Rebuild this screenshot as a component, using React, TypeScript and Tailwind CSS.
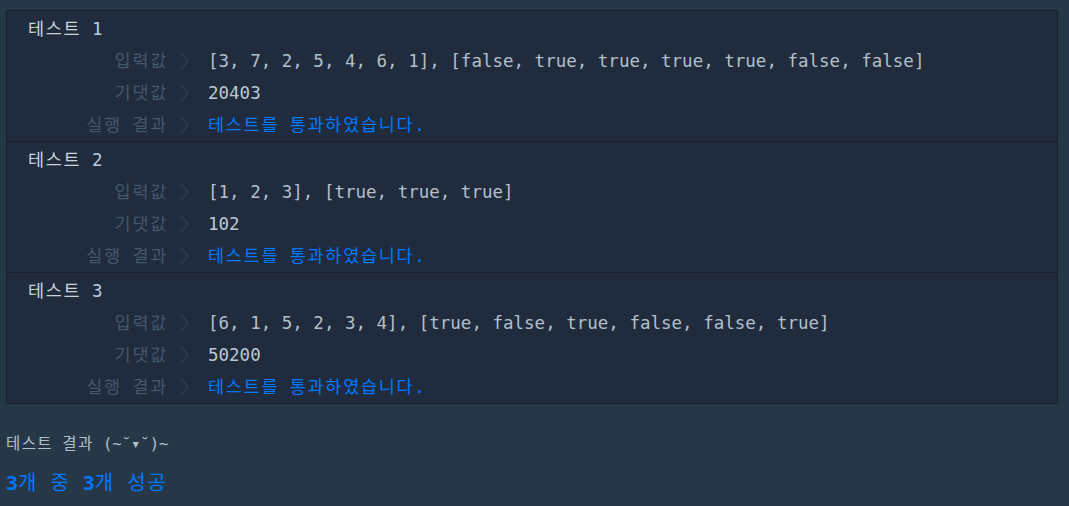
import React from 'react';

type TestCase = {
  input: string;
  expected: string;
};

const cases: TestCase[] = [
  { input: '[3, 7, 2, 5, 4, 6, 1], [false, true, true, true, true, false, false]', expected: '20403' },
  { input: '[1, 2, 3], [true, true, true]', expected: '102' },
  { input: '[6, 1, 5, 2, 3, 4], [true, false, true, false, false, true]', expected: '50200' },
];

const mono = "font-['DejaVu_Sans_Mono','Noto_Sans_CJK_KR',monospace]";

// 한글은 전각 폭으로 맞춤
function Ko({ text, wide = 'tracking-[1.7px]' }: { text: string; wide?: string }) {
  const parts = text.split(/([\uAC00-\uD7A3]+)/);
  return (
    <>
      {parts.map((p, i) =>
        /[\uAC00-\uD7A3]/.test(p) ? (
          <span key={i} className={wide}>
            {p}
          </span>
        ) : (
          <React.Fragment key={i}>{p}</React.Fragment>
        ),
      )}
    </>
  );
}

function Chevron() {
  return (
    <svg width="9" height="18" viewBox="0 0 9 18" className="ml-[12px]" aria-hidden>
      <polyline points="1,1 8,9 1,17" fill="none" stroke="#2f3e50" strokeWidth="1.2" />
    </svg>
  );
}

function Row({ label, children }: { label: string; children: React.ReactNode }) {
  return (
    <div className="grid h-[32px] grid-cols-[161px_40px_1fr] items-center">
      <span className="text-right text-[#44576c]">
        <Ko text={label} />
      </span>
      <span className="flex items-center">
        <Chevron />
      </span>
      <span className="whitespace-pre">{children}</span>
    </div>
  );
}

export default function App() {
  return (
    <div className={`min-h-[506px] w-full bg-[#263747] pt-[10px] ${mono}`}>
      <div className="ml-[6px] w-[1052px] border border-[#172130] bg-[#202b3d] text-[17.5px] leading-[32px]">
        {cases.map((c, i) => (
          <div
            key={i}
            className={`pt-[2px] ${i < cases.length - 1 ? 'border-b border-[#172130]' : ''}`}
          >
            <div className="h-[32px] pl-[21px] text-[#c9d3dd]">
              <Ko text="테스트 " />
              <span className="text-[#b9cde0]">{i + 1}</span>
            </div>
            <Row label="입력값">
              <span className="text-[#b2c0cc]">{c.input}</span>
            </Row>
            <Row label="기댓값">
              <span className="text-[#bcc9d4]">{c.expected}</span>
            </Row>
            <Row label="실행 결과">
              <span className="text-[#0078ff]">
                <Ko text="테스트를 통과하였습니다." />
              </span>
            </Row>
          </div>
        ))}
      </div>

      <div className="px-[6px] pt-[28px]">
        <div className="h-[24px] text-[15.5px] leading-[24px] text-[#b2c0cc]">
          <Ko text="테스트 결과 " wide="tracking-[1.4px]" />
          (~˘▾˘)~
        </div>
        <div className="mt-[11px] h-[32px] text-[20px] leading-[32px] text-[#0078ff]">
          <span className="font-bold">3</span>
          <Ko text="개 중 " wide="tracking-[1.9px]" />
          <span className="font-bold">3</span>
          <Ko text="개 성공" wide="tracking-[1.9px]" />
        </div>
      </div>
    </div>
  );
}
